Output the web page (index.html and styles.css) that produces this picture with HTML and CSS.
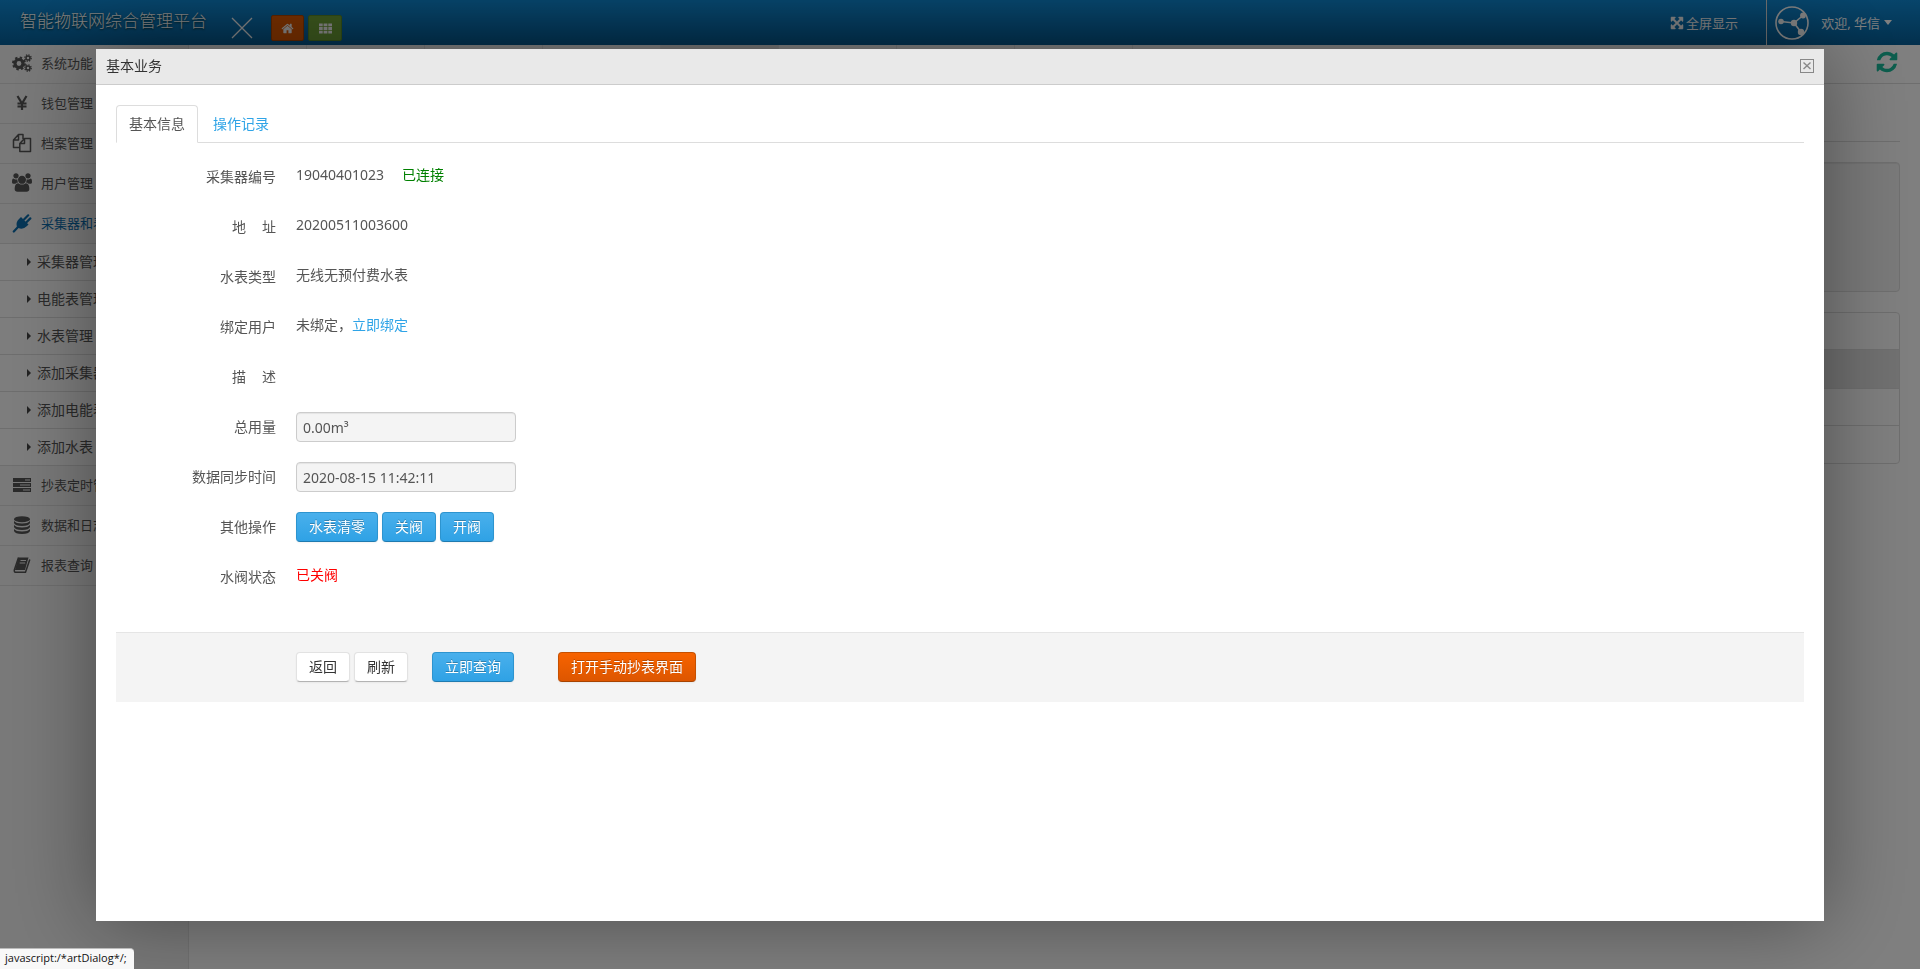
FILE: index.html
```html
<!DOCTYPE html>
<html lang="zh-CN">
<head>
<meta charset="utf-8">
<title>智能物联网综合管理平台</title>
<link rel="stylesheet" href="styles.css">
</head>
<body>
<div class="app">
  <header class="topbar">
    <h1 class="brand">智能物联网综合管理平台</h1>
    <button class="menu-close" aria-label="收起菜单"><svg viewBox="0 0 22 22" width="22" height="22"><path d="M1 1L21 21M21 1L1 21" stroke="#fff" stroke-width="1.3" fill="none"/></svg></button>
    <div class="shortcuts">
      <a href="#" class="shortcut shortcut-home" aria-label="首页"><svg viewBox="0 0 1792 1792" width="13" height="13"><path fill="#fff" d="M1472 992v480q0 26-19 45t-45 19h-384v-384h-256v384h-384q-26 0-45-19t-19-45v-480q0-1 .5-3t.5-3l575-474 575 474q1 2 1 6zm223-69l-62 74q-8 9-21 11h-3q-13 0-21-7l-692-577-692 577q-12 8-24 7-13-2-21-11l-62-74q-8-10-7-23.5t11-21.5l719-599q32-26 76-26t76 26l244 204v-195q0-14 9-23t23-9h192q14 0 23 9t9 23v408l219 182q10 8 11 21.5t-7 23.5z"/></svg></a>
      <a href="#" class="shortcut shortcut-grid" aria-label="功能"><svg viewBox="0 0 13 11" width="13" height="11"><path fill="#fff" d="M0 .5h3.7v2.8H0zM4.6.5h3.8v2.8H4.6zM9.3.5H13v2.8H9.3zM0 4.1h3.7v2.8H0zM4.6 4.1h3.8v2.8H4.6zM9.3 4.1H13v2.8H9.3zM0 7.7h3.7v2.8H0zM4.6 7.7h3.8v2.8H4.6zM9.3 7.7H13v2.8H9.3z"/></svg></a>
    </div>
    <a href="#" class="fullscreen"><svg viewBox="0 0 1792 1792" width="14" height="14"><path fill="#fff" stroke="#fff" stroke-width="60" d="M1411 541l-355 355 355 355 144-144q29-31 70-14 39 17 39 59v448q0 26-19 45t-45 19h-448q-42 0-59-40-17-39 14-69l144-144-355-355-355 355 144 144q31 30 14 69-17 40-59 40h-448q-26 0-45-19t-19-45v-448q0-42 40-59 39-17 69 14l144 144 355-355-355-355-144 144q-19 19-45 19-12 0-24-5-40-17-40-59v-448q0-26 19-45t45-19h448q42 0 59 40 17 39-14 69l-144 144 355 355 355-355-144-144q-31-30-14-69 17-40 59-40h448q26 0 45 19t19 45v448q0 42-39 59-13 5-25 5-26 0-45-19z"/></svg>全屏显示</a>
    <a href="#" class="account">
      <svg viewBox="0 0 34 34" width="34" height="34"><circle cx="17" cy="17" r="16" fill="none" stroke="#fff" stroke-width="1.6"/><path d="M6 15.500L19 17L28 9.500M19 17L26 26" stroke="#fff" stroke-width="1.6" fill="none"/><circle cx="6" cy="15.500" r="2.800" fill="#fff"/><circle cx="19" cy="17" r="3.200" fill="#fff"/><circle cx="28" cy="9.500" r="2.900" fill="#fff"/><circle cx="26" cy="26" r="3.200" fill="#fff"/></svg>
      <span class="welcome">欢迎, 华信</span><span class="caret"></span>
    </a>
  </header>
  <div class="workspace">
    <nav class="sidebar">
      <ul class="menu">
        <li><a href="#" class="menu-item"><svg viewBox="0 0 20 20" width="20" height="20"><g fill="none" stroke="#555"><circle cx="7" cy="10.500" r="4" stroke-width="3.200"/><circle cx="7" cy="10.500" r="6" stroke-width="2" stroke-dasharray="2.400 2.312"/><circle cx="16" cy="5" r="2" stroke-width="1.500"/><circle cx="16" cy="5" r="3.200" stroke-width="1.300" stroke-dasharray="1.300 1.213"/><circle cx="16" cy="15" r="2" stroke-width="1.500"/><circle cx="16" cy="15" r="3.200" stroke-width="1.300" stroke-dasharray="1.300 1.213"/></g></svg>系统功能</a></li>
        <li><a href="#" class="menu-item"><svg viewBox="0 0 20 20" width="20" height="20"><path d="M5.500 3L10 10.500L14.500 3M10 10V17M5.500 10.500H14.500M5.500 13.500H14.500" fill="none" stroke="#555" stroke-width="2.200"/></svg>钱包管理</a></li>
        <li><a href="#" class="menu-item"><svg viewBox="0 0 20 20" width="20" height="20"><path d="M7.500 14.500H1.500V7L6.500 1.500H11V6M6.500 1.500V7H1.500M7.800 10.500L12.500 5.500H18.500V18.500H7.800ZM12.500 5.500V10.500H7.800" fill="none" stroke="#555" stroke-width="1.500" stroke-linejoin="round"/></svg>档案管理</a></li>
        <li><a href="#" class="menu-item"><svg viewBox="0 0 1920 1792" width="20" height="19"><path fill="#555" d="M593 896q-162 5-265 128h-134q-82 0-138-40.5t-56-118.500q0-353 124-353 6 0 43.500 21t97.500 42.500 119 21.500q67 0 133-23-5 37-5 66 0 139 81 256zm1071 637q0 120-73 189.500t-194 69.500h-874q-121 0-194-69.500t-73-189.500q0-53 3.500-103.500t14-109 26.500-108.500 43-97.500 62-81 85.500-53.500 111.500-20q10 0 43 21.500t73 48 107 48 135 21.500 135-21.500 107-48 73-48 43-21.500q61 0 111.500 20t85.500 53.500 62 81 43 97.500 26.500 108.500 14 109 3.500 103.500zm-1024-1277q0 106-75 181t-181 75-181-75-75-181 75-181 181-75 181 75 75 181zm704 384q0 159-112.500 271.500t-271.500 112.500-271.500-112.500-112.500-271.500 112.500-271.500 271.500-112.500 271.500 112.500 112.500 271.500zm576 225q0 78-56 118.500t-138 40.500h-134q-103-123-265-128 81-117 81-256 0-29-5-66 66 23 133 23 59 0 119-21.500t97.500-42.500 43.500-21q124 0 124 353zm-128-609q0 106-75 181t-181 75-181-75-75-181 75-181 181-75 181 75 75 181z"/></svg>用户管理</a></li>
        <li><a href="#" class="menu-item menu-item-open"><svg viewBox="0 0 20 20" width="20" height="20"><path d="M1.800 18.500L6 14M12 6.500L16.200 2.300M14.200 9.500L18.300 5.400" stroke="#0b6cac" stroke-width="2.200" stroke-linecap="round" fill="none"/><path d="M9 4L16.500 11.500L15 13Q11 17 6.500 15L4.800 13.500Q3.500 9 7.500 5.500Z" fill="#0b6cac"/></svg>采集器和表管理</a>
          <ul class="submenu">
            <li><a href="#">采集器管理</a></li>
            <li><a href="#">电能表管理</a></li>
            <li><a href="#">水表管理</a></li>
            <li><a href="#">添加采集器</a></li>
            <li><a href="#">添加电能表</a></li>
            <li><a href="#">添加水表</a></li>
          </ul>
        </li>
        <li><a href="#" class="menu-item"><svg viewBox="0 0 20 20" width="20" height="20"><path d="M1 3h18v4H1zM1 8h18v4H1zM1 13h18v4H1z" fill="#555"/><path d="M13 4.500h5v1h-5zM8 9.500h10v1H8zM11 14.500h7v1h-7z" fill="#eee"/></svg>抄表定时管理</a></li>
        <li><a href="#" class="menu-item"><svg viewBox="0 0 20 20" width="20" height="20"><g fill="#555"><ellipse cx="10" cy="4.200" rx="8" ry="3"/><path d="M2 6Q4 8.500 10 8.500T18 6V8Q17 11 10 11T2 8ZM2 10Q4 12.500 10 12.500T18 10V12Q17 15 10 15T2 12ZM2 14Q4 16.500 10 16.500T18 14V16Q17 19 10 19T2 16Z"/></g></svg>数据和日志</a></li>
        <li><a href="#" class="menu-item"><svg viewBox="0 0 20 20" width="20" height="20"><path d="M6.500 2.500H16.500L13 15H3Z" fill="#555"/><path d="M6.500 2.500L2.300 15Q2 17.300 4 17.300H13.500L17.800 4.500" fill="none" stroke="#555" stroke-width="1.500" stroke-linejoin="round"/><path d="M8.500 5.500H14M7.700 8H13.200" stroke="#eee" stroke-width="1"/></svg>报表查询</a></li>
      </ul>
    </nav>
    <main class="main">
      <div class="tabstrip">
        <span class="page-tab"></span><span class="page-tab"></span><span class="page-tab"></span><span class="page-tab"></span><span class="page-tab page-tab-active"></span><span class="page-tab"></span><span class="page-tab"></span><span class="page-tab"></span>
        <button class="reload" aria-label="刷新页面"><svg viewBox="0 0 1792 1792" width="24" height="24"><path fill="#1abc9c" d="M1639 1056q0 5-1 7-64 268-268 434.500t-478 166.500q-146 0-282.500-55t-243.500-157l-129 129q-19 19-45 19t-45-19-19-45v-448q0-26 19-45t45-19h448q26 0 45 19t19 45-19 45l-137 137q71 66 161 102t187 36q134 0 250-65t186-179q11-17 53-117 8-23 30-23h192q13 0 22.500 9.500t9.500 22.500zm25-800v448q0 26-19 45t-45 19h-448q-26 0-45-19t-19-45 19-45l138-138q-148-137-349-137-134 0-250 65t-186 179q-11 17-53 117-8 23-30 23h-199q-13 0-22.500-9.500t-9.500-22.500v-7q65-268 270-434.500t480-166.500q146 0 284 55.500t245 156.500l130-129q19-19 45-19t45 19 19 45z"/></svg></button>
      </div>
      <div class="page">
        <div class="page-head"></div>
        <div class="filter-box"></div>
        <div class="grid-box">
          <div class="grid-row"></div>
          <div class="grid-row grid-row-head"></div>
          <div class="grid-row"></div>
          <div class="grid-row"></div>
        </div>
      </div>
    </main>
  </div>
</div>

<div class="mask">
  <section class="dialog" role="dialog" aria-labelledby="dialog-title">
    <header class="dialog-head">
      <h2 id="dialog-title">基本业务</h2>
      <button class="dialog-close" aria-label="关闭"><svg viewBox="0 0 14 14" width="14" height="14"><rect x=".5" y=".5" width="13" height="13" fill="none" stroke="#888"/><path d="M3.500 3.500L10.500 10M10.500 3.500L3.500 10" stroke="#888" stroke-width="1.400" fill="none"/></svg></button>
    </header>
    <div class="dialog-body">
      <nav class="tabs">
        <a href="#" class="tab tab-active">基本信息</a>
        <a href="#" class="tab">操作记录</a>
      </nav>
      <form class="form">
        <div class="field"><span class="label">采集器编号</span><div class="value">19040401023<span class="state-ok">已连接</span></div></div>
        <div class="field"><span class="label label-spread"><span>地</span><span>址</span></span><div class="value">20200511003600</div></div>
        <div class="field"><span class="label">水表类型</span><div class="value">无线无预付费水表</div></div>
        <div class="field"><span class="label">绑定用户</span><div class="value">未绑定，<a href="#">立即绑定</a></div></div>
        <div class="field"><span class="label label-spread"><span>描</span><span>述</span></span><div class="value"></div></div>
        <div class="field"><label class="label" for="total">总用量</label><input class="input" id="total" type="text" value="0.00m³" readonly></div>
        <div class="field"><label class="label" for="synced">数据同步时间</label><input class="input" id="synced" type="text" value="2020-08-15 11:42:11" readonly></div>
        <div class="field"><span class="label">其他操作</span><div class="buttons"><button type="button" class="btn btn-blue">水表清零</button><button type="button" class="btn btn-blue">关阀</button><button type="button" class="btn btn-blue">开阀</button></div></div>
        <div class="field"><span class="label">水阀状态</span><div class="value state-closed">已关阀</div></div>
        <div class="actions">
          <div class="buttons"><button type="button" class="btn">返回</button><button type="button" class="btn">刷新</button></div>
          <button type="button" class="btn btn-blue action-query">立即查询</button>
          <button type="button" class="btn btn-orange action-manual">打开手动抄表界面</button>
        </div>
      </form>
    </div>
  </section>
</div>
<div class="link-status">javascript:/*artDialog*/;</div>
</body>
</html>
```
FILE: styles.css
```css
* { box-sizing: border-box; }

body {
  margin: 0;
  background: #fff;
  color: #555;
  font: 14px/20px "Noto Sans", "Noto Sans CJK SC", sans-serif;
  overflow: hidden;
}

a { color: #2fa4e7; text-decoration: none; }
button { border: 0; padding: 0; background: none; font: inherit; cursor: pointer; }
ul { list-style: none; margin: 0; padding: 0; }
h1, h2 { margin: 0; font-weight: 400; }
svg { display: block; flex: none; }

.app { display: flex; flex-direction: column; height: 100vh; }

.topbar {
  display: flex;
  flex: none;
  height: 45px;
  padding-left: 20px;
  background: linear-gradient(#0e8ad6, #06609a);
  color: #fff;
}
.brand { font-size: 17px; font-weight: 300; line-height: 42px; text-shadow: 0 1px 2px #033; }
.menu-close { align-self: flex-start; margin: 17px 18px 0 24px; }
.shortcuts { display: flex; gap: 4px; padding-top: 15px; }
.shortcut {
  display: flex;
  align-items: center;
  justify-content: center;
  width: 33px;
  height: 26px;
  border: 1px solid #b34700;
  border-radius: 2px;
  background: #e65c00;
}
.shortcut-grid { border-color: #5c8f2a; background: #73a839; width: 34px; }
.fullscreen {
  display: flex;
  align-items: center;
  gap: 2px;
  margin-left: auto;
  padding-right: 28px;
  color: #fff;
  font-size: 13px;
}
.account {
  display: flex;
  align-items: center;
  padding: 0 28px 0 8px;
  border-left: 1px solid #ddd;
  color: #fff;
  font-size: 13px;
}
.welcome { margin-left: 12px; }
.caret { margin-left: 4px; border: 4px solid transparent; border-top: 5px solid #fff; border-bottom: 0; }

.workspace { display: flex; flex: 1; min-height: 0; }
.sidebar {
  width: 189px;
  flex: none;
  border-right: 1px solid #e4e4e4;
  background: #f3f3f3;
}
.menu-item {
  display: flex;
  align-items: center;
  gap: 9px;
  height: 40px;
  padding: 0 12px 2px;
  border-bottom: 1px solid #dcdcdc;
  color: #555;
  font-size: 13px;
  white-space: nowrap;
}
.menu > li:first-child .menu-item { height: 39px; }
.menu-item-open { color: #0b6cac; }
.submenu a {
  display: flex;
  align-items: center;
  gap: 6px;
  height: 37px;
  padding-left: 27px;
  border-bottom: 1px solid #dcdcdc;
  background: #fafafa;
  color: #555;
}
.submenu a::before {
  content: "";
  border: 4px solid transparent;
  border-left-color: #444;
  border-right: 0;
}

.main { flex: 1; min-width: 0; }
.tabstrip {
  display: flex;
  height: 39px;
  border-bottom: 1px solid #ddd;
}
.page-tab { width: 118px; border-right: 1px solid #eee; }
.page-tab-active { background: #ececec; }
.reload { align-self: flex-start; margin: 5px 21px 0 auto; }
.page { padding: 0 20px; }
.page-head { height: 58px; border-bottom: 1px solid #ddd; }
.filter-box {
  height: 130px;
  margin: 20px 0;
  border: 1px solid #dfdfdf;
  border-radius: 4px;
  background: #f5f5f5;
  box-shadow: inset 0 1px 1px #e6e6e6;
}
.grid-box { border: 1px solid #ddd; border-radius: 4px; }
.grid-row { height: 37px; border-bottom: 1px solid #ddd; }
.grid-row:last-child { border-bottom: 0; }
.grid-row-head { height: 39px; background: #e2e2e2; }

.mask {
  position: fixed;
  inset: 0;
  display: flex;
  align-items: center;
  justify-content: center;
  padding-top: 1px;
  background: rgba(0, 0, 0, .5);
}
.dialog {
  width: 90%;
  height: 90%;
  background: #fff;
  box-shadow: 0 0 80px rgba(0, 0, 0, .4);
}
.dialog-head {
  display: flex;
  align-items: center;
  justify-content: space-between;
  height: 36px;
  padding: 0 10px 2px;
  border-bottom: 1px solid #ccc;
  background: #e9e9e9;
  color: #333;
}
.dialog-head h2 { font-size: 14px; }
.dialog-body { padding: 20px; }

.tabs { display: flex; gap: 2px; border-bottom: 1px solid #ddd; }
.tab {
  margin-bottom: -1px;
  padding: 8px 12px;
  border: 1px solid transparent;
  border-radius: 4px 4px 0 0;
}
.tab-active { border-color: #ddd; border-bottom-color: #fff; background: #fff; color: #555; }

.form { padding-top: 19px; }
.field { display: flex; gap: 20px; height: 30px; margin-bottom: 20px; }
.label { width: 160px; padding-top: 5px; text-align: right; }
.label-spread { display: flex; justify-content: flex-end; gap: 16px; }
.value { padding-top: 3px; }
.state-ok { margin-left: 18px; color: #008000; }
.state-closed { color: #f00; }
.input {
  width: 220px;
  height: 30px;
  padding: 4px 6px;
  border: 1px solid #ccc;
  border-radius: 4px;
  background: #f4f4f4;
  box-shadow: inset 0 1px 1px #e4e4e4;
  color: #555;
  font: inherit;
}
.buttons { display: flex; gap: 4px; }
.btn {
  height: 30px;
  padding: 0 12px;
  border: 1px solid #e2e2e2;
  border-bottom-color: #b3b3b3;
  border-radius: 4px;
  background: #fff;
  box-shadow: 0 1px 2px rgba(0, 0, 0, .05);
  color: #333;
}
.btn-blue {
  border-color: #2d94cf #2d94cf #1f7bb0;
  background: linear-gradient(#49b0ec, #2fa2e5);
  color: #fff;
  text-shadow: 0 -1px 0 rgba(0, 0, 0, .25);
}
.btn-orange {
  border-color: #c65000 #c65000 #a84300;
  background: linear-gradient(#f76300, #dd5600);
  color: #fff;
  text-shadow: 0 -1px 0 rgba(0, 0, 0, .25);
}
.actions {
  display: flex;
  margin-top: 40px;
  padding: 19px 20px 20px 180px;
  border-top: 1px solid #e5e5e5;
  background: #f4f4f4;
}
.action-query { margin-left: 24px; }
.action-manual { margin-left: 44px; }

.link-status {
  position: fixed;
  left: 0;
  bottom: 0;
  padding: 0 7px 2px 5px;
  border-top: 1px solid #bbb;
  border-radius: 0 4px 0 0;
  background: #f8f8f8;
  color: #111;
  font: 11px/18px "Open Sans", sans-serif;
}
```
